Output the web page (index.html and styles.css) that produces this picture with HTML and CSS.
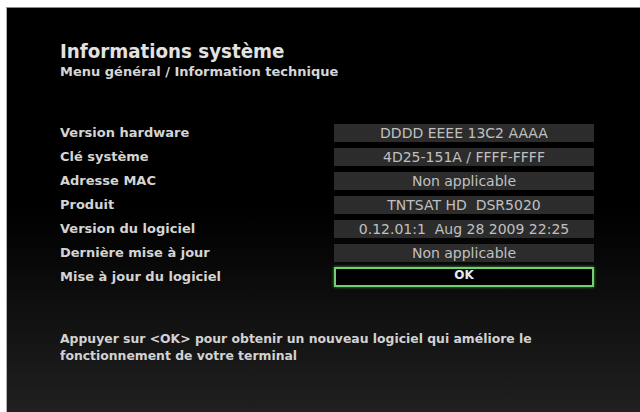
FILE: index.html
```html
<!DOCTYPE html>
<html lang="fr">
<head>
<meta charset="utf-8">
<title>Informations système</title>
<link rel="stylesheet" href="styles.css">
</head>
<body>
<div class="screen">
  <div class="header">
    <div class="title">Informations système</div>
    <div class="subtitle">Menu général / Information technique</div>
  </div>
  <div class="info">
    <div class="label">Version hardware</div><div class="value">DDDD EEEE 13C2 AAAA</div>
    <div class="label">Clé système</div><div class="value">4D25-151A / FFFF-FFFF</div>
    <div class="label">Adresse MAC</div><div class="value">Non applicable</div>
    <div class="label">Produit</div><div class="value">TNTSAT HD&nbsp;&nbsp;DSR5020</div>
    <div class="label">Version du logiciel</div><div class="value">0.12.01:1&nbsp;&nbsp;Aug 28 2009 22:25</div>
    <div class="label">Dernière mise à jour</div><div class="value">Non applicable</div>
    <div class="label">Mise à jour du logiciel</div><div class="value ok">OK</div>
  </div>
  <p class="help">Appuyer sur &lt;OK&gt; pour obtenir un nouveau logiciel qui améliore le<br>fonctionnement de votre terminal</p>
</div>
</body>
</html>
```

FILE: styles.css
```css
html, body {
  margin: 0;
  padding: 0;
  background: #ffffff;
}

.screen {
  margin: 7px 0 0 6px;
  width: 634px;
  height: 405px;
  box-sizing: border-box;
  padding: 0 0 0 53px;
  border-top: 1px solid #8a8a8a;
  border-left: 1px solid #b0b0b0;
  background: linear-gradient(to bottom, #000000 0%, #000000 50%, #202020 100%);
  font-family: "DejaVu Sans", Verdana, sans-serif;
  color: #dcdcdc;
  overflow: hidden;
}

.header {
  padding-top: 30px;
}

.title {
  font-family: "DejaVu Sans Condensed", "DejaVu Sans", sans-serif;
  font-size: 20.3px;
  font-weight: bold;
  line-height: 26px;
  color: #e2e2e2;
}

.subtitle {
  font-size: 13px;
  line-height: 16px;
  font-weight: bold;
  color: #d6d6d6;
}

.info {
  margin-top: 44px;
  display: grid;
  grid-template-columns: 274px 260px;
  grid-auto-rows: 18px;
  row-gap: 6px;
}

.label {
  font-size: 13px;
  font-weight: bold;
  line-height: 18px;
  color: #d4d4d4;
}

.value {
  background: #2c2c2c;
  font-size: 14px;
  line-height: 18px;
  text-align: center;
  color: #c0c0c0;
  white-space: nowrap;
}

.value.ok {
  background: #000000;
  border: 2px solid #72d072;
  box-shadow: 0 0 3px rgba(90, 200, 90, 0.8);
  height: 20px;
  margin-top: -1px;
  box-sizing: border-box;
  font-size: 12px;
  font-weight: bold;
  line-height: 13px;
  color: #e8e8e8;
}

.help {
  margin: 44px 0 0 0;
  font-size: 12.4px;
  font-weight: bold;
  line-height: 17px;
  color: #d2d2d2;
}
```
